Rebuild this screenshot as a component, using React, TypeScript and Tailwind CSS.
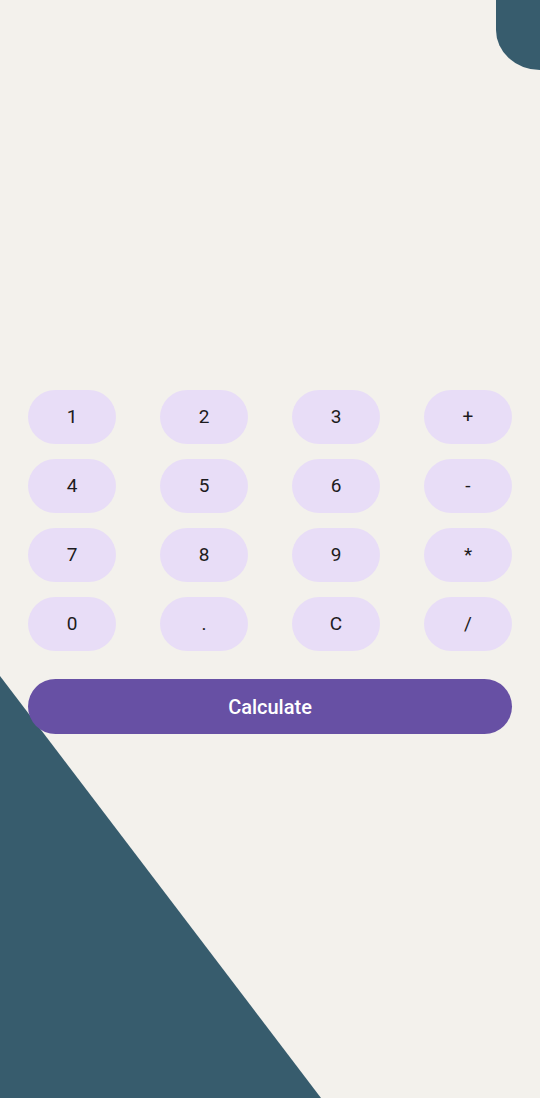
import React from "react";

const KEYS = ["1", "2", "3", "+", "4", "5", "6", "-", "7", "8", "9", "*", "0", ".", "C", "/"];

export default function App() {
  return (
    <div
      className="relative h-[1098px] w-full overflow-hidden bg-[#f3f1ec]"
      style={{ fontFamily: "Roboto, 'Noto Sans', sans-serif" }}
    >
      {/* top-right corner blob */}
      <div className="absolute right-0 top-0 h-[70px] w-[44px] rounded-bl-[44px_40px] bg-[#375c6d]" />

      {/* bottom-left triangle */}
      <svg
        className="absolute bottom-0 left-0"
        width="322"
        height="422"
        viewBox="0 0 322 422"
      >
        <polygon points="0,0 321,422 0,422" fill="#375c6d" />
      </svg>

      <div className="relative flex flex-col px-[28px]">
        <div className="h-[390px]" />

        <div className="grid grid-cols-4 gap-x-[44px] gap-y-[15px]">
          {KEYS.map((k) => (
            <button
              key={k}
              className="flex h-[54px] items-center justify-center rounded-full bg-[#e8ddf7] text-[19px] text-[#1d1b20]"
            >
              {k}
            </button>
          ))}
        </div>

        <button className="mt-[28px] flex h-[55px] w-full items-center justify-center rounded-full bg-[#6750a4] text-[20px] font-medium text-white">
          Calculate
        </button>
      </div>
    </div>
  );
}
